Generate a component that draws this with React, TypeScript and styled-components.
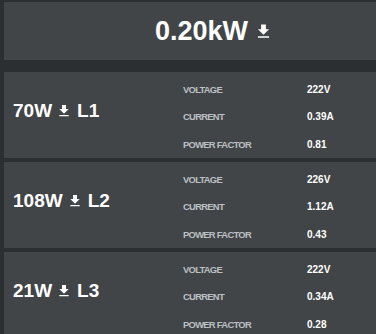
import React from "react";
import styled, { createGlobalStyle } from "styled-components";

const GlobalStyle = createGlobalStyle`
  html, body {
    margin: 0;
    padding: 0;
    background: #2b2f31;
    overflow: hidden;
  }
  body {
    font-family: "Liberation Sans", Arial, sans-serif;
  }
`;

const Page = styled.div`
  width: 420px;
  padding: 2px 0 0 4px;
  display: flex;
  flex-direction: column;
  gap: 12px;
`;

const TotalPanel = styled.div`
  height: 58px;
  background: #414548;
  display: flex;
  align-items: center;
  justify-content: center;
  gap: 6px;
  color: #fff;
  font-weight: bold;
  font-size: 27px;
`;

const PhaseList = styled.div`
  display: flex;
  flex-direction: column;
  gap: 4px;
`;

const PhasePanel = styled.div`
  height: 86px;
  box-sizing: border-box;
  padding-top: 4px;
  background: #414548;
  display: grid;
  grid-template-columns: 179px 124px 1fr;
  grid-template-rows: repeat(3, 1fr);
  align-items: center;
`;

const PhaseTitle = styled.div`
  grid-row: 1 / span 3;
  padding: 0 0 12px 9px;
  display: flex;
  align-items: center;
  gap: 4px;
  color: #fff;
  font-weight: bold;
  font-size: 19px;
`;

const Line = styled.span`
  margin-left: 1px;
`;

const Label = styled.div`
  color: #bcc0c2;
  font-weight: bold;
  font-size: 9.4px;
  letter-spacing: -0.7px;
`;

const Value = styled.div`
  color: #fff;
  font-weight: bold;
  font-size: 10px;
`;

function DownloadIcon({ size }: { size: number }) {
  return (
    <svg width={size} height={size} viewBox="0 0 24 24" fill="#fff">
      <path d="M19 9h-4V3H9v6H5l7 7 7-7zM5 18v2h14v-2H5z" />
    </svg>
  );
}

const phases = [
  { power: "70W", line: "L1", voltage: "222V", current: "0.39A", pf: "0.81" },
  { power: "108W", line: "L2", voltage: "226V", current: "1.12A", pf: "0.43" },
  { power: "21W", line: "L3", voltage: "222V", current: "0.34A", pf: "0.28" },
];

export default function App() {
  return (
    <>
      <GlobalStyle />
      <Page>
        <TotalPanel>
          <span>0.20kW</span>
          <DownloadIcon size={19} />
        </TotalPanel>
        <PhaseList>
          {phases.map((p) => (
            <PhasePanel key={p.line}>
              <PhaseTitle>
                <span>{p.power}</span>
                <DownloadIcon size={16} />
                <Line>{p.line}</Line>
              </PhaseTitle>
              <Label>VOLTAGE</Label>
              <Value>{p.voltage}</Value>
              <Label>CURRENT</Label>
              <Value>{p.current}</Value>
              <Label>POWER FACTOR</Label>
              <Value>{p.pf}</Value>
            </PhasePanel>
          ))}
        </PhaseList>
      </Page>
    </>
  );
}
